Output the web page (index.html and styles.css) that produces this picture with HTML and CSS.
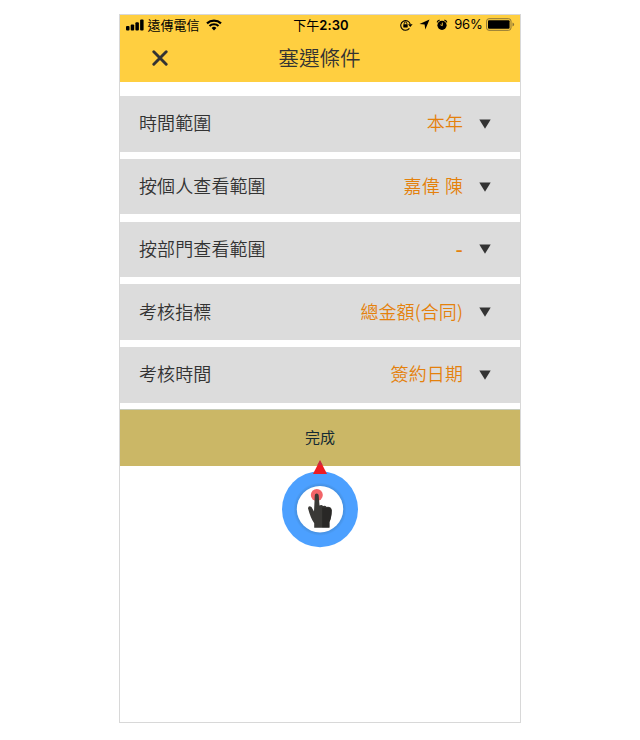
FILE: index.html
```html
<!DOCTYPE html>
<html lang="zh-Hant">
<head>
<meta charset="utf-8">
<title>塞選條件</title>
<link rel="stylesheet" href="styles.css">
</head>
<body>
<main class="phone">
  <header class="header">
    <div class="status">
      <div class="status-left">
        <svg class="signal" width="18" height="12" viewBox="0 0 18 12"><rect x="0" y="7" width="3.5" height="4.5" rx="1"/><rect x="4.7" y="5.5" width="3.5" height="6" rx="1"/><rect x="9.4" y="3.2" width="3.5" height="8.3" rx="1"/><rect x="14.1" y=".5" width="3.5" height="11" rx="1"/></svg>
        <span class="carrier">遠傳電信</span>
        <svg class="wifi" width="16" height="12" viewBox="0 0 16 12"><path d="M1 4.4a10.2 10.2 0 0 1 14 0M3.5 7a6.6 6.6 0 0 1 9 0" fill="none" stroke="#000" stroke-width="2.2"/><path d="M5.6 8.9a3.5 3.5 0 0 1 4.8 0L8 11.4z"/></svg>
      </div>
      <div class="clock">下午<b>2:30</b></div>
      <div class="status-right">
        <svg class="lock" width="13" height="12" viewBox="0 0 13 12"><path d="M9.4 9.3A4.8 4.8 0 1 1 10.2 5.2" fill="none" stroke="#000" stroke-width="1.1"/><path d="M8 5.2h4.6L10.3 8z"/><rect x="3.3" y="5.3" width="4.4" height="3.2" rx=".4"/><path d="M4.2 5.4V4.3a1.3 1.3 0 0 1 2.6 0v1.1" fill="none" stroke="#000" stroke-width=".9"/></svg>
        <svg class="arrow" width="11" height="11" viewBox="0 0 11 11"><path d="M10.5.5 6.3 10.6 5.6 5.6.5 5z"/></svg>
        <svg class="alarm" width="12" height="12" viewBox="0 0 12 12"><circle cx="6" cy="6.3" r="4.6"/><path d="M1.2 3.4Q1.6 1.6 3.6 1.2M8.4 1.2q2 .4 2.4 2.2" fill="none" stroke="#000" stroke-width="1.3"/><path d="M6.3 3.6v3L4.4 5.8" fill="none" stroke="#ffcf40" stroke-width=".9"/></svg>
        <span class="percent">96%</span>
        <svg class="battery" width="29" height="13" viewBox="0 0 29 13"><rect x=".6" y=".7" width="24.4" height="11.6" rx="2.4" fill="none" stroke="#8b7435"/><rect x="2" y="2.2" width="21.6" height="8.6" rx="1"/><path d="M26.5 4.6q1.6.5 1.6 1.9t-1.6 1.9z" fill="#8b7435"/></svg>
      </div>
    </div>
    <div class="titlebar">
      <svg class="close" width="16" height="16" viewBox="0 0 16 16"><path d="m1.8 1.8 12.4 12.4M14.2 1.8 1.8 14.2" fill="none" stroke="#333" stroke-width="2.9" stroke-linecap="round"/></svg>
      <h1>塞選條件</h1>
    </div>
  </header>
  <section class="filters">
    <div class="row"><span class="label">時間範圍</span><span class="value">本年</span><svg class="caret" width="12" height="10" viewBox="0 0 12 10"><path d="M.3.5h11.4L6 9.7z"/></svg></div>
    <div class="row"><span class="label">按個人查看範圍</span><span class="value spaced">嘉偉 陳</span><svg class="caret" width="12" height="10" viewBox="0 0 12 10"><path d="M.3.5h11.4L6 9.7z"/></svg></div>
    <div class="row"><span class="label">按部門查看範圍</span><span class="value dash">-</span><svg class="caret" width="12" height="10" viewBox="0 0 12 10"><path d="M.3.5h11.4L6 9.7z"/></svg></div>
    <div class="row"><span class="label">考核指標</span><span class="value">總金額(合同)</span><svg class="caret" width="12" height="10" viewBox="0 0 12 10"><path d="M.3.5h11.4L6 9.7z"/></svg></div>
    <div class="row"><span class="label">考核時間</span><span class="value">簽約日期</span><svg class="caret" width="12" height="10" viewBox="0 0 12 10"><path d="M.3.5h11.4L6 9.7z"/></svg></div>
  </section>
  <div class="action">
    <button class="done" type="button">完成</button>
    <svg class="pointer" width="78" height="90" viewBox="0 0 78 90">
      <defs><radialGradient id="ring"><stop offset=".59" stop-color="#438cd9"/><stop offset=".7" stop-color="#4ca0ff"/></radialGradient></defs>
      <circle cx="39" cy="50.2" r="38" fill="url(#ring)"/>
      <circle cx="39" cy="50.2" r="23.2" fill="#fff"/>
      <path d="M39 1.2 46 15H32z" fill="#ed1c24"/>
      <path d="M39 1.2 41.6 6h-5.2z" fill="#c52d43"/>
      <circle cx="35.8" cy="36" r="6" fill="#f26468"/>
      <path d="M33.8 36.5q.1-2 1.9-2t2 2l.8 10.1q2-1.2 3.6.5 2-1 3.6.8 4.4-.7 5.1 3.2-.2 7.8-2.3 11.9v5.8H33.2v-4.5q-3.6-5.1-6.2-15.1.5-3.2 3.5-1.2l2.5 4.6z" fill="#3a3936"/>
      <path d="M41.2 48.5v19.8h7.1v-5.4q2.2-4.2 2.3-11.5-.6-3.2-4.9-2.7z" fill="#292826"/>
    </svg>
  </div>
</main>
</body>
</html>
```
FILE: styles.css
```css
* { box-sizing: border-box; }

body {
  margin: 0;
  background: #fff;
  font-family: "Noto Sans CJK TC", sans-serif;
  color: #333;
}

.phone {
  width: 402px;
  height: 709px;
  margin: 14px 0 0 119px;
  border: 1px solid #d8d8d8;
  display: flex;
  flex-direction: column;
}

.header {
  height: 67px;
  flex: none;
  background: #ffcf40;
}

.status {
  height: 19px;
  display: grid;
  grid-template-columns: 1fr auto 1fr;
  align-items: center;
  padding: 0 5px 0 6px;
  color: #000;
  line-height: 19px;
  white-space: nowrap;
}

.status-left, .status-right { display: flex; align-items: center; }
.status-left { margin-top: -1px; }
.status-right { justify-content: flex-end; margin-top: -1px; }
.carrier { margin-left: 3.5px; font-size: 13px; }
.wifi { margin-left: 6.5px; }
.clock { padding-left: 1px; font-size: 13px; font-weight: 400; }
.clock b { font-family: Inter, sans-serif; font-weight: 600; letter-spacing: .1px; }
.arrow { margin-left: 6.5px; }
.alarm { margin-left: 6px; }
.percent { margin-left: 6px; font: 13px/19px Inter, sans-serif; letter-spacing: -.2px; }
.battery { margin: 0 0 0 3.5px; }

.titlebar {
  height: 48px;
  display: grid;
  grid-template-columns: 80px 1fr 80px;
  align-items: center;
}

.close { margin-left: 32px; }

h1 {
  margin: 0 1px 0 0;
  text-align: center;
  font-size: 20.6px;
  font-weight: 350;
  line-height: 46px;
  padding-bottom: 2px;
}

.filters {
  flex: none;
  padding-top: 14px;
  display: grid;
  gap: 7.3px;
}

.row {
  height: 55.5px;
  background: #dcdcdc;
  display: flex;
  align-items: center;
  padding: 0 29.5px 0 19px;
  font-size: 18px;
  font-weight: 350;
  line-height: 53px;
  white-space: nowrap;
}

.label, .value { padding-bottom: 2px; letter-spacing: .1px; }
.label { flex: 1; }
.value { color: #e4810c; }
.spaced { word-spacing: 1px; }
.dash { font: 22px/53px "Liberation Sans", sans-serif; padding: 1px 0 0; }
.caret { margin-left: 15.5px; fill: #333; }

.action {
  position: relative;
  margin-top: 6.3px;
  flex: none;
}

.done {
  display: block;
  width: 100%;
  height: 57px;
  padding: 0 0 2px;
  border: 0;
  border-top: 1px solid #c6cbbb;
  background: #cbb766;
  color: #142a33;
  font: 15px/54px "Noto Sans CJK TC", sans-serif;
}

.pointer {
  position: absolute;
  left: 161px;
  top: 50px;
}
```
